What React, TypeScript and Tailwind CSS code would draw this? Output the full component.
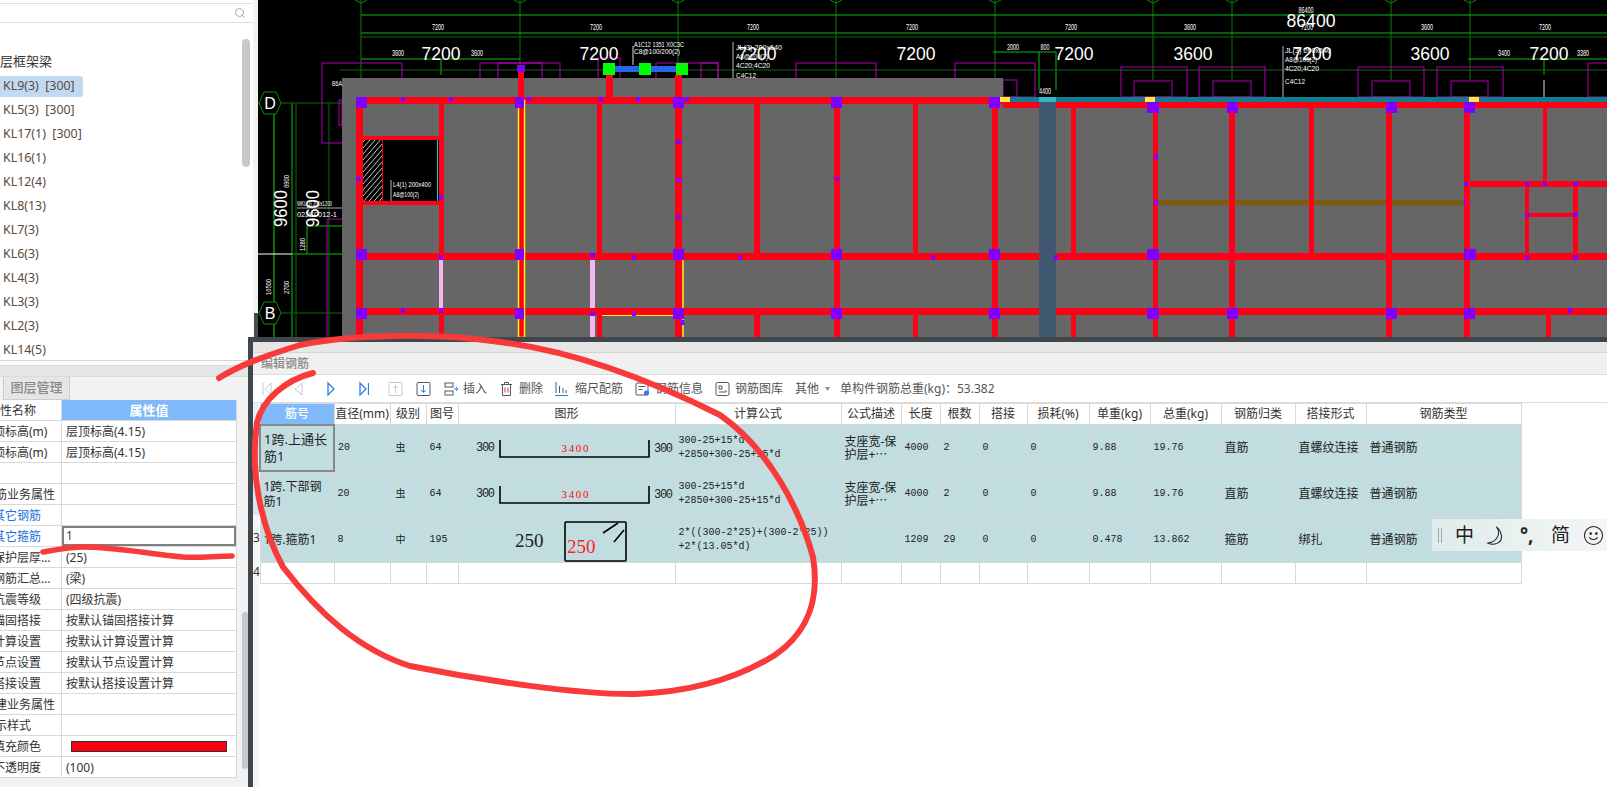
import React from "react";
import { Search } from "lucide-react";

type Box = [number, number, number, number];

const RED = "#ff0016";
const PURPLE = "#7f00ff";

const treeItems = [
  "KL9(3)  [300]",
  "KL5(3)  [300]",
  "KL17(1)  [300]",
  "KL16(1)",
  "KL12(4)",
  "KL8(13)",
  "KL7(3)",
  "KL6(3)",
  "KL4(3)",
  "KL3(3)",
  "KL2(3)",
  "KL14(5)",
];

const propRows: { name: string; nameCls: string; value: string; blue?: boolean; active?: boolean; swatch?: boolean }[] = [
  { name: "起点顶标高(m)", nameCls: "ml-[-31px]", value: "层顶标高(4.15)" },
  { name: "终点顶标高(m)", nameCls: "ml-[-31px]", value: "层顶标高(4.15)" },
  { name: "", nameCls: "", value: "" },
  { name: "钢筋业务属性", nameCls: "ml-[-17px]", value: "" },
  { name: "其它钢筋", nameCls: "ml-[-7px]", value: "", blue: true },
  { name: "其它箍筋", nameCls: "ml-[-7px]", value: "1", blue: true, active: true },
  { name: "保护层厚…", nameCls: "ml-[-7px]", value: "(25)" },
  { name: "钢筋汇总…", nameCls: "ml-[-7px]", value: "(梁)" },
  { name: "抗震等级", nameCls: "ml-[-7px]", value: "(四级抗震)" },
  { name: "锚固搭接", nameCls: "ml-[-7px]", value: "按默认锚固搭接计算" },
  { name: "计算设置", nameCls: "ml-[-7px]", value: "按默认计算设置计算" },
  { name: "节点设置", nameCls: "ml-[-7px]", value: "按默认节点设置计算" },
  { name: "搭接设置", nameCls: "ml-[-7px]", value: "按默认搭接设置计算" },
  { name: "土建业务属性", nameCls: "ml-[-17px]", value: "" },
  { name: "显示样式", nameCls: "ml-[-17px]", value: "" },
  { name: "填充颜色", nameCls: "ml-[-7px]", value: "", swatch: true },
  { name: "不透明度", nameCls: "ml-[-7px]", value: "(100)" },
];

const columns = [
  { title: "筋号", w: 74 },
  { title: "直径(mm)", w: 56 },
  { title: "级别", w: 36 },
  { title: "图号", w: 32 },
  { title: "图形", w: 217 },
  { title: "计算公式", w: 166 },
  { title: "公式描述", w: 60 },
  { title: "长度", w: 39 },
  { title: "根数", w: 39 },
  { title: "搭接", w: 48 },
  { title: "损耗(%)", w: 62 },
  { title: "单重(kg)", w: 61 },
  { title: "总重(kg)", w: 71 },
  { title: "钢筋归类", w: 74 },
  { title: "搭接形式", w: 71 },
  { title: "钢筋类型", w: 155 },
];

const bars = [
  { name: "1跨.上通长筋1", dia: "20", grade: "虫", fig: "64", shape: "bar", f1: "300-25+15*d", f2: "+2850+300-25+15*d", desc: "支座宽-保护层+⋯", len: "4000", n: "2", unit: "9.88", total: "19.76", cat: "直筋", join: "直螺纹连接" },
  { name: "1跨.下部钢筋1", dia: "20", grade: "虫", fig: "64", shape: "bar", f1: "300-25+15*d", f2: "+2850+300-25+15*d", desc: "支座宽-保护层+⋯", len: "4000", n: "2", unit: "9.88", total: "19.76", cat: "直筋", join: "直螺纹连接" },
  { name: "1跨.箍筋1", dia: "8", grade: "中", fig: "195", shape: "hoop", f1: "2*((300-2*25)+(300-2*25))", f2: "+2*(13.05*d)", desc: "", len: "1209", n: "29", unit: "0.478", total: "13.862", cat: "箍筋", join: "绑扎" },
];

// beams and columns, [x1, y1, x2, y2] in page pixels
const redBoxes: Box[] = [
  [356, 97, 1003, 104], [1003, 102, 1607, 108], [356, 253, 1607, 260], [356, 308, 1607, 315],
  [356, 97, 363, 337], [439, 104, 444, 253], [439, 315, 444, 337], [518, 70, 524, 337],
  [597, 104, 602, 253], [597, 315, 602, 337], [606, 75, 613, 97], [675, 75, 682, 337],
  [754, 104, 760, 253], [754, 315, 760, 337], [834, 97, 840, 337], [913, 104, 918, 253],
  [913, 315, 918, 337], [992, 104, 998, 337], [1071, 108, 1076, 253], [1071, 315, 1076, 337],
  [1153, 108, 1158, 337], [1229, 108, 1235, 337], [1309, 108, 1314, 253], [1386, 108, 1392, 337],
  [1464, 108, 1470, 337], [1543, 108, 1547, 181], [1525, 187, 1529, 253], [1573, 187, 1578, 253],
  [1546, 315, 1551, 337], [1470, 181, 1607, 187], [1529, 213, 1573, 217], [363, 136, 439, 140], [363, 201, 439, 205],
];

const purpleBoxes: Box[] = [
  [356, 97, 367, 108], [356, 249, 367, 260], [356, 308, 367, 319],
  [515, 97, 524, 108], [515, 249, 524, 260], [515, 308, 524, 319],
  [673, 97, 684, 108], [673, 249, 684, 260], [673, 308, 684, 319],
  [517, 65, 525, 72],
  [401, 97, 405, 102], [449, 97, 453, 102], [527, 97, 531, 102], [599, 97, 603, 102], [636, 97, 640, 102], [685, 97, 689, 102],
  [356, 177, 361, 181], [439, 195, 443, 200], [676, 140, 681, 144], [676, 178, 681, 182], [676, 215, 681, 219],
  [439, 255, 443, 260], [590, 253, 595, 258], [632, 255, 636, 260], [738, 255, 742, 260],
  [401, 308, 405, 313], [439, 308, 443, 313], [590, 312, 595, 316], [632, 312, 636, 316], [680, 320, 684, 325],
  [831, 97, 842, 108], [831, 249, 842, 260], [831, 308, 842, 319],
  [989, 97, 1000, 108], [989, 249, 1000, 260], [989, 308, 1000, 319],
  [1147, 102, 1159, 113], [1147, 249, 1159, 260], [1147, 308, 1159, 319],
  [1227, 102, 1238, 113], [1227, 308, 1238, 319],
  [1386, 102, 1397, 113], [1386, 308, 1397, 319],
  [1464, 102, 1475, 113], [1464, 249, 1476, 260], [1464, 308, 1475, 319],
  [835, 177, 839, 181], [931, 255, 935, 260], [1054, 255, 1058, 260], [1154, 154, 1158, 159], [1154, 200, 1158, 205],
  [1464, 182, 1468, 186], [1464, 200, 1466, 205], [1525, 182, 1529, 186], [1543, 182, 1547, 186], [1573, 182, 1578, 186],
  [1525, 213, 1529, 217], [1573, 213, 1578, 217], [1525, 255, 1529, 260], [1573, 255, 1578, 260], [1568, 308, 1572, 313],
];

const magentaBoxes: Box[] = [
  [322, 63, 402, 143], [339, 100, 342, 125], [480, 63, 560, 97], [498, 63, 542, 97], [598, 58, 620, 97], [656, 63, 718, 97], [701, 63, 718, 97],
  [327, 219, 345, 340], [796, 63, 876, 97], [955, 63, 1035, 97], [1003, 80, 1017, 97],
  [1121, 67, 1187, 97], [1134, 81, 1172, 97], [1199, 67, 1265, 97], [1213, 81, 1251, 97],
  [1358, 67, 1424, 97], [1372, 81, 1410, 97], [1437, 67, 1503, 97], [1451, 81, 1488, 97], [1588, 63, 1620, 97],
];

const axes = [361, 520, 678, 836, 995, 1153, 1232, 1391, 1470];

const smallDims: [string, number, number][] = [
  ["7200", 438, 30], ["7200", 596, 30], ["7200", 753, 30], ["7200", 912, 30], ["7200", 1071, 30], ["3600", 1190, 30], ["7200", 1307, 30], ["3600", 1427, 30], ["7200", 1545, 30],
  ["3600", 398, 56], ["3600", 477, 56], ["2000", 1013, 50], ["800", 1045, 50], ["3400", 1504, 56], ["3380", 1583, 56], ["4400", 1045, 94], ["86400", 1306, 13],
];

const bigDims: [string, number][] = [
  ["7200", 441], ["7200", 599], ["7200", 757], ["7200", 916], ["7200", 1074], ["3600", 1193], ["7200", 1312], ["3600", 1430], ["7200", 1549],
];

const beamNotes: [string, number, number, number][] = [
  ["A1C12 1351 X0C3C", 634, 47, 50], ["C8@100/200(2)", 634, 54, 46],
  ["JL(3) 200x640", 736, 50, 46], ["A8@100(2)", 736, 59, 32], ["4C20;4C20", 736, 68, 34], ["C4C12", 736, 78, 20],
  ["JL(3) 200x640", 1285, 53, 46], ["A8@100(2)", 1285, 62, 32], ["4C20;4C20", 1285, 71, 34], ["C4C12", 1285, 84, 20],
  ["L4(1) 200x400", 393, 187, 38], ["A8@100(2)", 393, 197, 26],
  ["WKL(3) 200x1200", 297, 206, 35], ["02JK0012-1", 297, 217, 40], ["B6A", 332, 86, 10],
];

const rects = (items: Box[], fill: string) =>
  items.map((b, i) => <rect key={i} x={b[0]} y={b[1]} width={b[2] - b[0]} height={b[3] - b[1]} fill={fill} />);

const AxisBubble: React.FC<{ y: number; label: string }> = ({ y, label }) => (
  <g>
    <polygon points={`259,${y} 264,${y - 11} 276,${y - 11} 281,${y} 276,${y + 11} 264,${y + 11}`} fill="#000" stroke="#0a8a0a" />
    <text x={270} y={y + 6} fill="#fff" fontSize="16" textAnchor="middle" fontFamily="Liberation Sans">{label}</text>
  </g>
);

const CadCanvas: React.FC = () => (
  <svg className="block" width={1354} height={337} viewBox="253 0 1354 337">
    <defs>
      <clipPath id="hatch-area">
        <rect x={363} y={140} width={19} height={61} />
      </clipPath>
    </defs>
    <rect x={253} y={0} width={1354} height={337} fill="#000" />
    <rect x={253} y={0} width={5} height={337} fill="#f2f2f2" />
    <rect x={254} y={313} width={4} height={24} fill="#464e55" />

    {axes.map((x) => (
      <g key={x}>
        <line x1={x} y1={0} x2={x} y2={80} stroke="#0a7a0a" />
        <polyline points={`${x - 6},0 ${x},3 ${x + 6},0`} fill="none" stroke="#0a8a0a" />
      </g>
    ))}
    <g stroke="#0fb80f">
      <line x1={361} y1={15} x2={1607} y2={15} />
      <line x1={361} y1={33} x2={1607} y2={33} />
      <line x1={361} y1={59} x2={520} y2={59} />
      <line x1={1468} y1={59} x2={1607} y2={59} />
      <line x1={441} y1={59} x2={441} y2={75} />
      <line x1={1544} y1={59} x2={1544} y2={75} />
      <line x1={993} y1={52} x2={1056} y2={52} />
      <line x1={1039} y1={52} x2={1039} y2={90} />
      <line x1={1056} y1={52} x2={1056} y2={90} />
      <line x1={292} y1={103} x2={292} y2={337} />
      <line x1={292} y1={254} x2={345} y2={254} />
      <line x1={307} y1={226} x2={307} y2={254} />
      <line x1={307} y1={226} x2={345} y2={226} />
    </g>
    <g stroke="#0a6a0a">
      <line x1={361} y1={37} x2={1607} y2={37} />
      <line x1={340} y1={70} x2={1607} y2={70} />
      <line x1={258} y1={103} x2={345} y2={103} />
      <line x1={258} y1={313} x2={345} y2={313} />
      <line x1={296} y1={103} x2={296} y2={337} />
      <line x1={329} y1={103} x2={329} y2={337} />
      <line x1={274} y1={103} x2={274} y2={337} strokeWidth={2} />
    </g>
    <line x1={258} y1={254} x2={292} y2={254} stroke="#fff" />
    <line x1={633} y1={46} x2={633} y2={65} stroke="#ddd" />
    <line x1={733} y1={42} x2={733} y2={78} stroke="#bbb" />
    <line x1={1283} y1={46} x2={1283} y2={100} stroke="#bbb" />
    <line x1={297} y1={208} x2={345} y2={208} stroke="#aaa" />
    <line x1={1544} y1={80} x2={1544} y2={100} stroke="#ddd" />

    {magentaBoxes.map((b, i) => (
      <rect key={i} x={b[0]} y={b[1]} width={b[2] - b[0]} height={b[3] - b[1]} fill="none" stroke="#b000b0" />
    ))}

    <AxisBubble y={103} label="D" />
    <AxisBubble y={313} label="B" />

    {/* slab */}
    <rect x={342} y={78} width={661} height={259} fill="#666" />
    <rect x={1003} y={102} width={604} height={235} fill="#666" />
    <rect x={1003} y={97} width={604} height={5} fill="#0f7f90" />

    {/* opening */}
    <rect x={363} y={140} width={76} height={61} fill="#000" />
    <g stroke="#c4c4c4" clipPath="url(#hatch-area)">
      {[0, 6, 12, 18, 24, 30, 36, 42, 48, 54, 60, 66, 72, 78, 84].map((o) => (
        <line key={o} x1={363} y1={136 + o} x2={382} y2={114 + o} />
      ))}
    </g>
    <line x1={382.5} y1={140} x2={382.5} y2={201} stroke={RED} />
    <line x1={437.5} y1={140} x2={437.5} y2={201} stroke="#18c8d8" />
    <line x1={391} y1={180} x2={391} y2={201} stroke="#bbb" />

    {rects([[1158, 200, 1464, 205]], "#7f5a0d")}
    {rects(redBoxes, RED)}
    {rects([[439, 260, 443, 308], [590, 260, 595, 308], [590, 315, 595, 337]], "#f4b6ee")}
    <rect x={518.5} y={100.5} width={6} height={237} fill="none" stroke="#fff200" strokeWidth={1.5} />
    <line x1={683} y1={260} x2={683} y2={337} stroke="#fff200" strokeWidth={1.5} />
    <line x1={602} y1={315.5} x2={682} y2={315.5} stroke="#fff200" />
    <rect x={1039} y={100} width={17} height={237} fill="#40586f" />
    <rect x={1039} y={97} width={17} height={5} fill="#35b7c4" />
    {rects(purpleBoxes, PURPLE)}
    {rects([[1000, 97, 1010, 102], [1145, 97, 1155, 102], [1469, 97, 1479, 102]], "#ffe83c")}
    <rect x={615} y={66} width={61} height={6} fill="#2468e8" />
    {rects([[603, 63, 615, 75], [639, 63, 651, 75], [676, 63, 688, 75]], "#00ff00")}

    <g fill="#fff" fontFamily="Liberation Sans">
      {smallDims.map(([t, x, y], i) => (
        <text key={i} x={x} y={y} fontSize="9" textAnchor="middle" textLength={t.length * 3} lengthAdjust="spacingAndGlyphs">{t}</text>
      ))}
      {bigDims.map(([t, x], i) => (
        <text key={i} x={x} y={60} fontSize="19" textAnchor="middle" textLength={39} lengthAdjust="spacingAndGlyphs">{t}</text>
      ))}
      <text x={1311} y={27} fontSize="19" textAnchor="middle" textLength={49} lengthAdjust="spacingAndGlyphs">86400</text>
      {beamNotes.map(([t, x, y, w], i) => (
        <text key={i} x={x} y={y} fontSize="8" textLength={w} lengthAdjust="spacingAndGlyphs">{t}</text>
      ))}
      <text transform="translate(287 227) rotate(-90)" fontSize="19" textLength={37} lengthAdjust="spacingAndGlyphs">9600</text>
      <text transform="translate(319 227) rotate(-90)" fontSize="19" textLength={37} lengthAdjust="spacingAndGlyphs">9600</text>
      <text transform="translate(289 188) rotate(-90)" fontSize="8" textLength={13} lengthAdjust="spacingAndGlyphs">6900</text>
      <text transform="translate(305 251) rotate(-90)" fontSize="8" textLength={13} lengthAdjust="spacingAndGlyphs">1280</text>
      <text transform="translate(271 295) rotate(-90)" fontSize="8" textLength={16} lengthAdjust="spacingAndGlyphs">16500</text>
      <text transform="translate(289 294) rotate(-90)" fontSize="8" textLength={13} lengthAdjust="spacingAndGlyphs">2700</text>
    </g>
  </svg>
);

const TreePanel: React.FC = () => (
  <div className="h-[361px] shrink-0 border-b border-[#d5d5d5] flex flex-col">
    <div className="h-[3px] shrink-0 border-b border-[#e0e0e0] box-content"></div>
    <div className="h-[19px] shrink-0 border-b border-[#e0e0e0] flex items-center justify-end pr-[7px]">
      <Search size={12} className="text-[#a8a8a8]" />
    </div>
    <div className="relative flex-1 overflow-hidden">
      <div className="pt-[27px]">
        <div className="h-[24px] text-[13px] leading-[22px] text-[#333] ml-[-13px] whitespace-nowrap">楼层框架梁</div>
        {treeItems.map((t, i) => (
          <div key={t} className="h-[24px] flex items-center">
            <span className={i === 0 ? "w-[83px] h-[21px] flex items-center pl-[3px] rounded-r-[3px] bg-[#c2d9f2] text-[12.4px] text-[#5a4a3e] whitespace-pre" : "pl-[3px] text-[12.4px] text-[#5a4a3e] whitespace-pre"}>
              {t}
            </span>
          </div>
        ))}
      </div>
      <div className="absolute right-[3px] top-[16px] w-[8px] h-[128px] rounded bg-[#c8c8c8]"></div>
    </div>
  </div>
);

const PropPanel: React.FC = () => (
  <div className="relative flex-1 bg-[#f2f2f2]">
    <div className="h-[4px] bg-[#fafafa]"></div>
    <div className="h-[12px] bg-[#e6e6e6] border-y border-[#dcdcdc]"></div>
    <div className="h-[23px] flex">
      <div className="w-[4px] border-r border-[#ccc]"></div>
      <div className="w-[66px] h-[23px] bg-[#e6e6e6] border border-t-0 border-l-0 border-[#ccc] flex items-center justify-center text-[13px] font-medium text-[#888]">
        图层管理
      </div>
    </div>
    <div className="w-[237px] bg-white border-r border-[#d9d9d9] text-[12px] text-[#333]">
      <div className="flex h-[21px] border-b border-[#d9d9d9]">
        <div className="w-[62px] border-r border-[#d9d9d9] overflow-hidden leading-[22px] whitespace-nowrap">
          <span className="inline-block ml-[-12px]">属性名称</span>
        </div>
        <div className="flex-1 bg-[#7fb9f9] text-white font-bold text-[13px] text-center leading-[20px]">属性值</div>
      </div>
      {propRows.map((r, i) => (
        <div key={i} className="flex h-[21px] border-b border-[#d9d9d9]">
          <div className={r.blue ? "w-[62px] border-r border-[#d9d9d9] overflow-hidden leading-[21px] whitespace-nowrap text-[#1a6fe0]" : "w-[62px] border-r border-[#d9d9d9] overflow-hidden leading-[21px] whitespace-nowrap"}>
            <span className={`inline-block ${r.nameCls}`}>{r.name}</span>
          </div>
          {r.active ? (
            <div className="flex-1 border-2 border-[#808080] leading-[16px] pl-[2px] text-[#444]">{r.value}</div>
          ) : r.swatch ? (
            <div className="flex-1 flex items-center px-[9px]">
              <div className="w-full h-[11px] bg-[#ff0010] border border-[#333]"></div>
            </div>
          ) : (
            <div className="flex-1 pl-[4px] leading-[21px] whitespace-nowrap">{r.value}</div>
          )}
        </div>
      ))}
    </div>
    <div className="absolute left-[242px] top-[251px] w-[6px] h-[157px] rounded bg-[#c8c8c8]"></div>
  </div>
);

const Icon: React.FC<{ w: number; children: React.ReactNode }> = ({ w, children }) => (
  <svg width={w} height={16} viewBox={`0 0 ${w} 16`} fill="none" className="shrink-0">{children}</svg>
);

const Toolbar: React.FC = () => (
  <div className="h-[28px] bg-white border-b border-[#dcdcdc] relative shrink-0 flex items-center pl-[9px] text-[12px] text-[#555]">
    <Icon w={10}><path d="M1 2v12M9 2L3 8l6 6z" stroke="#c8c8c8" /></Icon>
    <div className="w-[21px]"></div>
    <Icon w={10}><path d="M9 2L2 8l7 6z" stroke="#c8c8c8" /></Icon>
    <div className="w-[24px]"></div>
    <Icon w={8}><path d="M1 2l6 6-6 6z" stroke="#2a7de1" strokeWidth="1.3" /></Icon>
    <div className="w-[24px]"></div>
    <Icon w={10}><path d="M1 2l6 6-6 6zM9.5 2v12" stroke="#2a7de1" strokeWidth="1.3" /></Icon>
    <div className="w-[19px]"></div>
    <Icon w={15}><rect x="1" y="1.5" width="13" height="13" rx="1" stroke="#c8c8c8" /><path d="M7.5 12V5M5 7l2.5-2.5L10 7" stroke="#c8c8c8" /></Icon>
    <div className="w-[13px]"></div>
    <Icon w={15}><rect x="1" y="1.5" width="13" height="13" rx="1" stroke="#4a5a6a" /><path d="M7.5 4v7M5 9l2.5 2.5L10 9" stroke="#2a7de1" /></Icon>
    <div className="w-[13px]"></div>
    <Icon w={15}><rect x="1" y="2" width="8" height="4" stroke="#4a5a6a" /><rect x="1" y="10" width="8" height="4" stroke="#4a5a6a" /><path d="M10 8h4M12 6l2 2-2 2" stroke="#2a7de1" /></Icon>
    <span className="ml-[4px] w-[24px]">插入</span>
    <div className="w-[13px]"></div>
    <Icon w={13}><path d="M1 3.5h11M4.5 3.5V1.5h4v2M2.5 3.5V14.5h8V3.5" stroke="#4a5a6a" /><path d="M5 6.5v5M8 6.5v5" stroke="#e03030" /></Icon>
    <span className="ml-[6px] w-[24px]">删除</span>
    <div className="w-[12px]"></div>
    <Icon w={13}><path d="M1 1v11M4.5 5v7M8 7v5M11 9v3" stroke="#4a5a6a" /><path d="M0 14.5h13" stroke="#2a7de1" /></Icon>
    <span className="ml-[7px] w-[48px]">缩尺配筋</span>
    <div className="w-[12px]"></div>
    <Icon w={15}><rect x="1" y="2" width="12" height="12" rx="1" stroke="#4a5a6a" /><path d="M3.5 5.5h7M3.5 8.5h4" stroke="#4a5a6a" /><circle cx="11.5" cy="12" r="2.5" fill="#2a7de1" /></Icon>
    <span className="ml-[5px] w-[48px]">钢筋信息</span>
    <div className="w-[12px]"></div>
    <Icon w={15}><rect x="1" y="1.5" width="13" height="13" rx="1.5" stroke="#4a5a6a" /><path d="M4 5h3v3H4zM4 11h7V9" stroke="#4a5a6a" /></Icon>
    <span className="ml-[5px] w-[48px]">钢筋图库</span>
    <div className="w-[12px]"></div>
    <span className="w-[24px]">其他</span>
    <span className="ml-[6px] text-[5px] text-[#888]">▼</span>
    <span className="ml-[10px] whitespace-nowrap">单构件钢筋总重(kg)：53.382</span>
  </div>
);

const BarShape: React.FC = () => (
  <svg width={216} height={45} viewBox="0 0 216 45" className="block">
    <text x={17} y={26} fontSize="12" fill="#222" fontFamily="Liberation Mono" textLength={19}>300</text>
    <path d="M41 15v17h149V15" fill="none" stroke="#000" strokeWidth="1.6" />
    <text x={116} y={27} fontSize="11" fill="#ff0000" textAnchor="middle" fontFamily="Liberation Serif" textLength={27}>3400</text>
    <text x={195} y={27} fontSize="12" fill="#222" fontFamily="Liberation Mono" textLength={19}>300</text>
  </svg>
);

const HoopShape: React.FC = () => (
  <svg width={216} height={45} viewBox="0 0 216 45" className="block">
    <text x={56} y={30} fontSize="19" fill="#222" fontFamily="Liberation Serif">250</text>
    <rect x={106} y={5} width={61} height={39} rx="1" fill="none" stroke="#000" strokeWidth="1.6" />
    <path d="M144 16l15-10M155 25l10-12" stroke="#000" strokeWidth="1.6" />
    <text x={108} y={36} fontSize="19" fill="#ff2030" fontFamily="Liberation Serif">250</text>
  </svg>
);

const monoCell = "border border-[#d8d8d8] align-middle px-[3px] font-['Liberation_Mono','Noto_Sans_CJK_SC',monospace] text-[10px] text-[#222] overflow-hidden";
const textCell = "border border-[#d8d8d8] align-middle px-[3px] text-[12px] text-[#222] overflow-hidden whitespace-nowrap";

const RebarTable: React.FC = () => (
  <div className="flex-1 flex bg-white overflow-hidden">
    <div className="w-[6px] shrink-0 bg-[#f5f5f5] text-[12px] text-[#333]">
      <div className="h-[20px] bg-[#e8f1fb]"></div>
      <div className="h-[46px] bg-[#d5e6f5]"></div>
      <div className="h-[46px] bg-[#d5e6f5]"></div>
      <div className="h-[46px] flex items-center">3</div>
      <div className="h-[21px] flex items-center">4</div>
    </div>
    <table className="table-fixed border-collapse w-[1261px] h-fit">
      <colgroup>
        {columns.map((c) => <col key={c.title} width={c.w} />)}
      </colgroup>
      <thead>
        <tr className="h-[21px]">
          {columns.map((c, i) => (
            <th key={c.title} className={i === 0 ? "border border-[#d8d8d8] bg-[#7fb9f9] text-white text-[12px] font-medium" : "border border-[#d8d8d8] text-[12px] font-normal text-[#333] whitespace-nowrap"}>
              {c.title}
            </th>
          ))}
        </tr>
      </thead>
      <tbody>
        {bars.map((b, i) => (
          <tr key={i} className="h-[46px] bg-[#c1dde0]">
            <td className={i === 0 ? "border-2 border-[#888] px-[3px] text-[13px] leading-[17px] text-[#222]" : "border border-[#d8d8d8] px-[3px] text-[12px] leading-[15px] text-[#222]"}>{b.name}</td>
            <td className={monoCell}>{b.dia}</td>
            <td className="border border-[#d8d8d8] align-middle pl-[5px] text-[10px] text-[#222]">{b.grade}</td>
            <td className={monoCell}>{b.fig}</td>
            <td className="border border-[#d8d8d8] p-0">{b.shape === "bar" ? <BarShape /> : <HoopShape />}</td>
            <td className={`${monoCell} leading-[14px] whitespace-nowrap`}>{b.f1}<br />{b.f2}</td>
            <td className="border border-[#d8d8d8] px-[3px] text-[12px] leading-[13px] text-[#222]">{b.desc}</td>
            <td className={monoCell}>{b.len}</td>
            <td className={monoCell}>{b.n}</td>
            <td className={monoCell}>0</td>
            <td className={monoCell}>0</td>
            <td className={monoCell}>{b.unit}</td>
            <td className={monoCell}>{b.total}</td>
            <td className={textCell}>{b.cat}</td>
            <td className={textCell}>{b.join}</td>
            <td className={textCell}>普通钢筋</td>
          </tr>
        ))}
        <tr className="h-[21px]">
          {columns.map((c) => <td key={c.title} className="border border-[#d8d8d8]"></td>)}
        </tr>
      </tbody>
    </table>
  </div>
);

const RebarDialog: React.FC = () => (
  <div className="absolute left-[248px] top-[337px] right-0 bottom-0 flex flex-col bg-white border-l-[5px] border-t-[5px] border-[#3f474d]">
    <div className="h-[11px] bg-[#e6e6e6] border-b border-[#d5d5d5] shrink-0"></div>
    <div className="h-[22px] bg-[#f0f0f0] border-b border-[#dcdcdc] shrink-0 pl-[8px] text-[12px] leading-[21px] font-medium text-[#8a8a8a]">编辑钢筋</div>
    <Toolbar />
    <RebarTable />
  </div>
);

const ImeBar: React.FC = () => (
  <div className="absolute left-[1432px] top-[519px] w-[175px] h-[32px] flex items-center bg-gradient-to-r from-[#dfecec] to-[#f4f5f5] text-[#222]">
    <span className="ml-[6px] w-[4px] h-[15px] border-x border-[#9aa]"></span>
    <span className="ml-[13px] w-[19px] text-[19px] leading-none">中</span>
    <svg width={21} height={21} viewBox="0 0 22 22" className="ml-[11px]" fill="none">
      <path d="M12 2c4 5 3 15-9 17 6 3 16 0 14-9-.6-3-2.500-6-5-8z" stroke="#222" strokeWidth="1.1" />
    </svg>
    <span className="ml-[14px] w-[19px] text-[19px] leading-none font-bold whitespace-nowrap">°,</span>
    <span className="ml-[12px] w-[19px] text-[19px] leading-none">简</span>
    <svg width={21} height={21} viewBox="0 0 22 22" className="ml-[13px]" fill="none" stroke="#222" strokeWidth="1.1">
      <circle cx="11" cy="11" r="9.500" />
      <circle cx="8" cy="9" r="0.8" fill="#222" />
      <circle cx="14" cy="9" r="0.8" fill="#222" />
      <path d="M6.500 13c2 3 7 3 9 0" />
    </svg>
  </div>
);

const Annotation: React.FC = () => (
  <svg className="absolute left-0 top-0 pointer-events-none" width={1607} height={787} viewBox="0 0 1607 787" fill="none">
    <path
      d="M219 378C240 365 262 357 300 345C350 335 430 332 500 342C580 352 660 385 720 415C770 450 800 510 813 557C820 600 808 632 775 655C735 680 690 692 636 694C580 695 480 680 410 666C360 650 320 615 283 567C260 525 250 470 257 423C262 400 285 380 313 373"
      stroke="#f83a3a"
      strokeWidth="6"
      strokeLinecap="round"
      strokeLinejoin="round"
    />
    <path d="M43 552C60 549 70 547 83 547C115 547 150 554 183 557C200 558 215 556 232 556" stroke="#f83a3a" strokeWidth="5.500" strokeLinecap="round" />
  </svg>
);

export default function App() {
  return (
    <div className="relative w-[1607px] h-[787px] flex overflow-hidden bg-white font-['Noto_Sans','Noto_Sans_CJK_SC',sans-serif]">
      <aside className="w-[253px] shrink-0 flex flex-col overflow-hidden bg-white">
        <TreePanel />
        <PropPanel />
      </aside>
      <main className="flex-1">
        <CadCanvas />
      </main>
      <RebarDialog />
      <ImeBar />
      <Annotation />
    </div>
  );
}
